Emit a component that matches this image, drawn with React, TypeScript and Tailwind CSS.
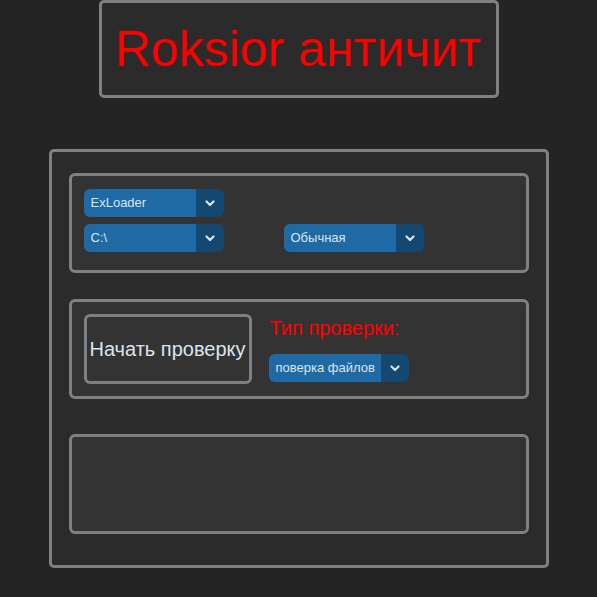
function Chevron() {
  return (
    <svg width="10" height="7" viewBox="0 0 10 7" fill="none">
      <path d="M1.5 1.5L5 5L8.5 1.5" stroke="#dce4ee" strokeWidth="2.2" strokeLinecap="round" strokeLinejoin="round" />
    </svg>
  )
}

function OptionMenu({ value }: { value: string }) {
  return (
    <div className="flex h-[28px] w-[140px] rounded-[6px] overflow-hidden">
      <div className="flex-1 bg-[#1f6aa5] flex items-center pl-[7px] text-[13px] text-[#dce4ee]">
        {value}
      </div>
      <div className="w-[28px] bg-[#144870] flex items-center justify-center">
        <Chevron />
      </div>
    </div>
  )
}

export default function App() {
  return (
    <div
      className="w-full h-[597px] bg-[#242424] flex flex-col items-center overflow-hidden"
      style={{ fontFamily: '"Liberation Sans", Arial, sans-serif' }}
    >
      {/* Title */}
      <div className="w-[400px] h-[98px] border-[3px] border-[#808080] rounded-[5px] bg-[#2b2b2b] flex items-center justify-center">
        <span className="text-[50px] text-[#ff0000] leading-none">Roksior античит</span>
      </div>

      {/* Main frame */}
      <div className="mt-[51px] w-[500px] h-[419px] border-[3px] border-[#808080] rounded-[5px] bg-[#2b2b2b] pt-[21px] flex flex-col items-center">
        {/* Paths */}
        <div className="w-[460px] h-[100px] border-[3px] border-[#808080] rounded-[6px] bg-[#333333] pt-[13px] pl-[12px] flex flex-col gap-[7px]">
          <OptionMenu value="ExLoader" />
          <div className="flex gap-[60px]">
            <OptionMenu value="C:\" />
            <OptionMenu value="Обычная" />
          </div>
        </div>

        {/* Check */}
        <div className="mt-[26px] w-[460px] h-[100px] border-[3px] border-[#808080] rounded-[6px] bg-[#333333] pt-[12px] pl-[12px] flex gap-[17px]">
          <button className="w-[168px] h-[70px] border-[3px] border-[#808080] rounded-[6px] bg-[#333333] flex items-center justify-center text-[20px] text-[#dce4ee] whitespace-nowrap">
            Начать проверку
          </button>
          <div className="flex flex-col pt-[3px]">
            <span className="text-[20px] text-[#ff0000] leading-[22px] pl-[1px]">Тип проверки:</span>
            <div className="mt-[15px]">
              <OptionMenu value="поверка файлов" />
            </div>
          </div>
        </div>

        {/* Log */}
        <div className="mt-[35px] w-[460px] h-[100px] border-[3px] border-[#808080] rounded-[6px] bg-[#333333]" />
      </div>
    </div>
  )
}
